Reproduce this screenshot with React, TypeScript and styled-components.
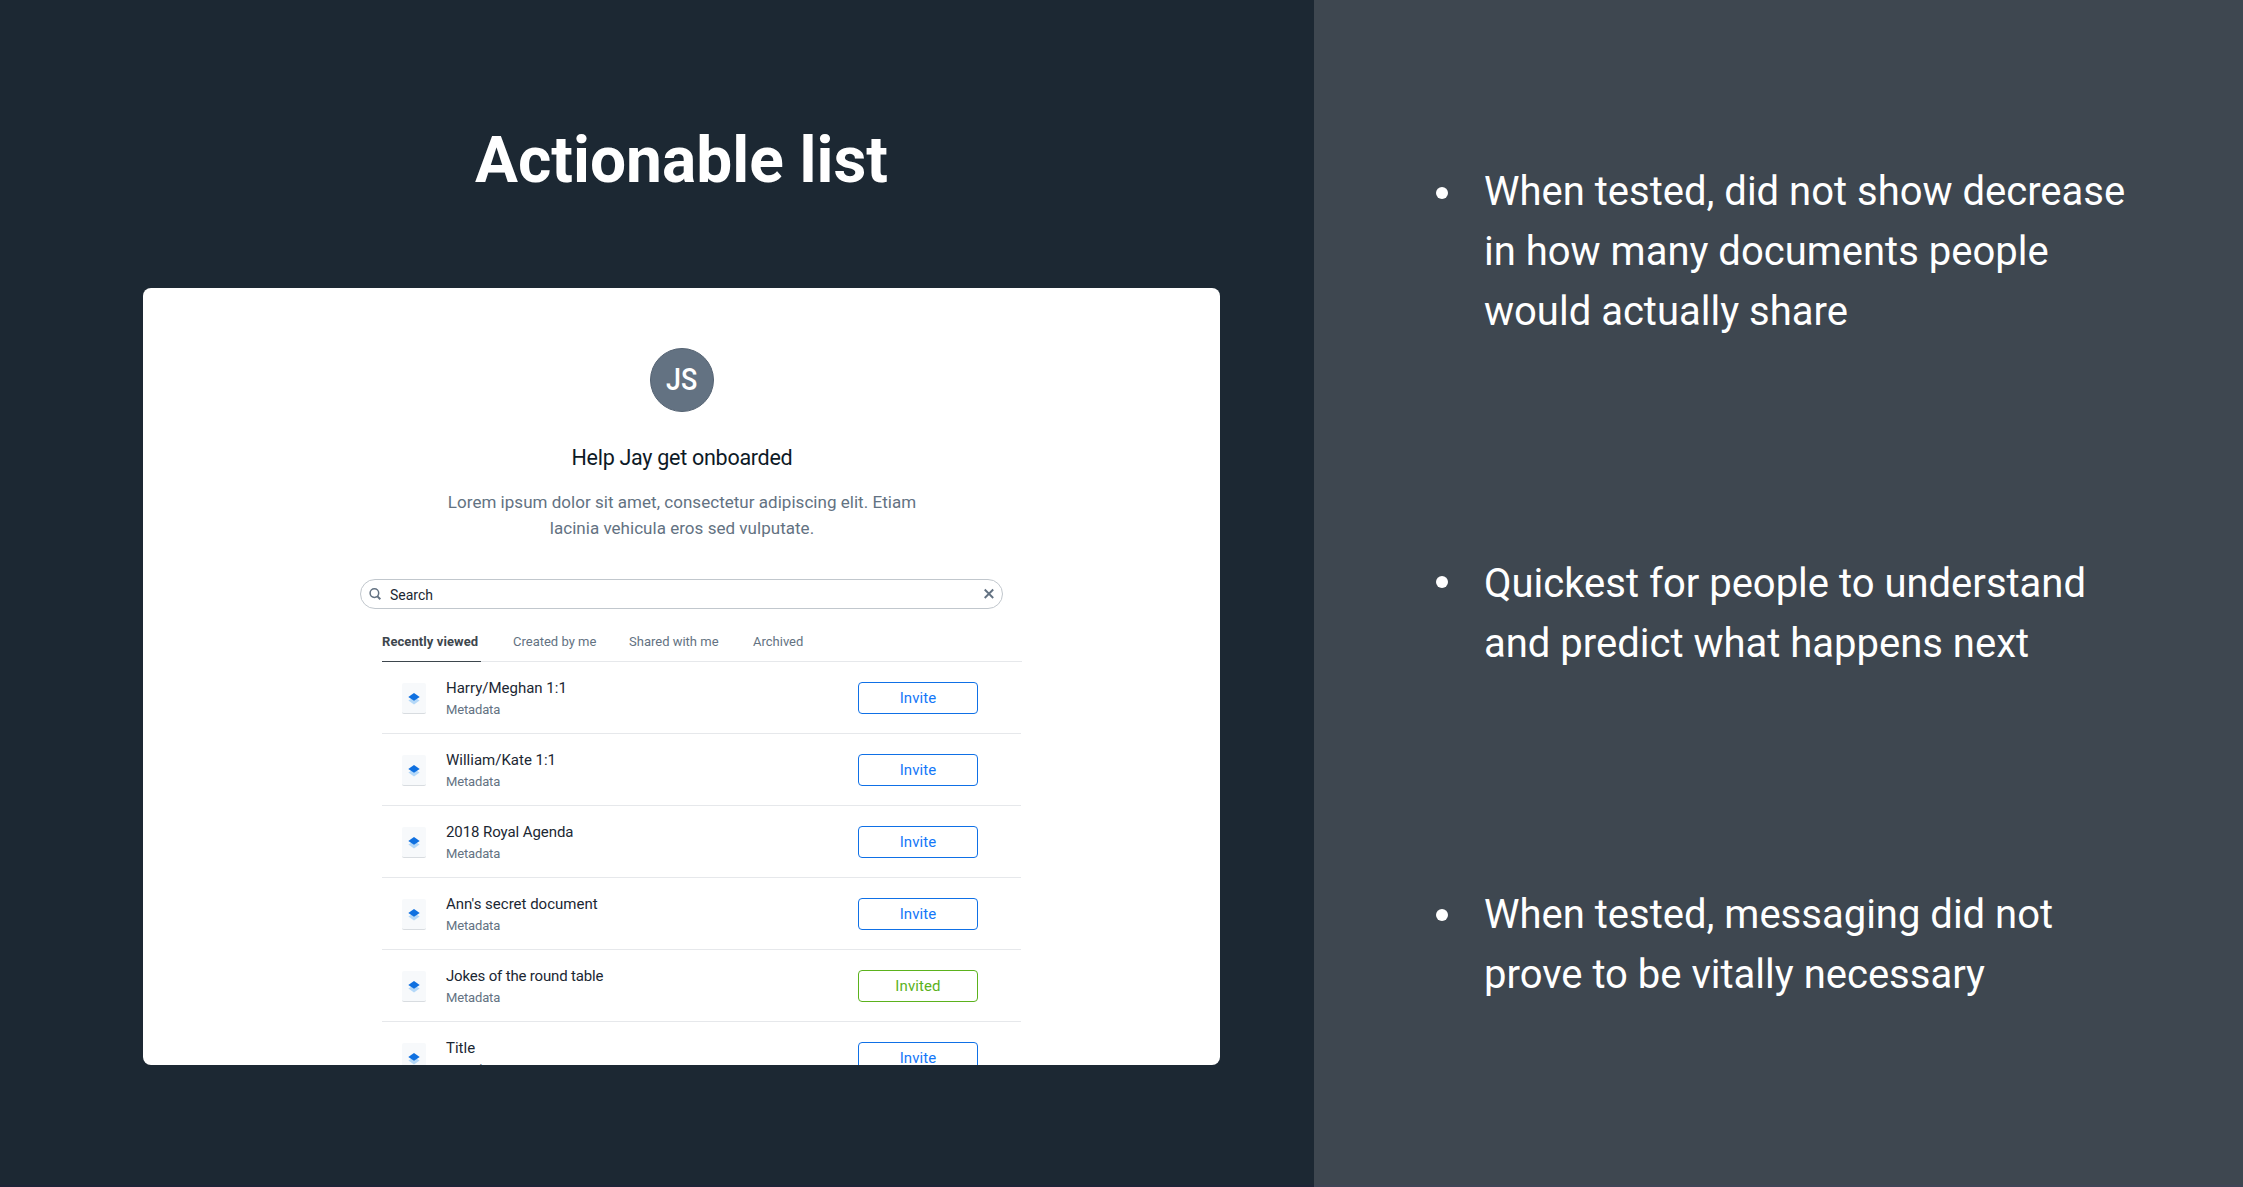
import React from "react";
import styled, { createGlobalStyle } from "styled-components";

const GlobalStyle = createGlobalStyle`
  *, *::before, *::after { box-sizing: border-box; }
  html, body { margin: 0; padding: 0; }
  body { font-family: Roboto, "Liberation Sans", sans-serif; overflow: hidden; }
`;

const Slide = styled.main`
  display: flex;
  width: 2243px;
  height: 1187px;
  overflow: hidden;
`;

const Stage = styled.section`
  display: flex;
  flex-direction: column;
  align-items: center;
  width: 1314px;
  padding: 123px 94px 0 143px;
  background: #1c2833;
  border-bottom: 2px solid #1d2437;
`;

const SlideTitle = styled.h1`
  margin: 0 0 89px;
  font-size: 64px;
  font-weight: 700;
  line-height: 76px;
  color: #fff;
  white-space: nowrap;
`;

const Card = styled.div`
  display: flex;
  flex-direction: column;
  align-items: center;
  width: 1077px;
  height: 777px;
  padding-top: 60px;
  background: #fff;
  border-radius: 8px;
  overflow: hidden;
`;

const Avatar = styled.div`
  display: flex;
  flex: none;
  align-items: center;
  justify-content: center;
  width: 64px;
  height: 64px;
  padding-bottom: 2px;
  border: 1px solid #556373;
  border-radius: 50%;
  background: #637282;
`;

const Initials = styled.span`
  color: #fff;
  font-size: 32px;
  font-weight: 500;
  line-height: 32px;
  transform: scaleX(0.84);
`;

const Heading = styled.h2`
  margin: 31px 0 0 1px;
  font-size: 21.5px;
  font-weight: 400;
  line-height: 30px;
  letter-spacing: -0.28px;
  color: #0d1a26;
  white-space: nowrap;
`;

const Blurb = styled.p`
  margin: 16px 0 0 1px;
  font-size: 17px;
  line-height: 26px;
  letter-spacing: 0.03px;
  color: #637282;
  text-align: center;
  white-space: pre-line;
`;

const SearchField = styled.div`
  display: flex;
  flex: none;
  align-items: center;
  width: 643px;
  height: 30px;
  margin-top: 38px;
  padding: 0 7px 0 8px;
  border: 1px solid #c1c7cd;
  border-radius: 15px;
`;

const SearchText = styled.span`
  flex: 1;
  margin-left: 8px;
  padding-top: 2px;
  font-size: 14px;
  line-height: 20px;
  color: #1b2733;
`;

const Browser = styled.div`
  flex: none;
  width: 640px;
  margin-left: 41px;
`;

const Tabs = styled.nav`
  display: flex;
  height: 53px;
  padding-top: 20px;
  border-bottom: 1px solid #e6e8eb;
`;

const Tab = styled.span<{ $active?: boolean; $width: number }>`
  flex: none;
  width: ${(p) => p.$width}px;
  height: 33px;
  margin-right: 32px;
  padding-top: 3px;
  font-size: 13px;
  font-weight: ${(p) => (p.$active ? 700 : 400)};
  line-height: 20px;
  letter-spacing: ${(p) => (p.$active ? "0.08px" : "0")};
  color: ${(p) => (p.$active ? "#3d464d" : "#637282")};
  border-bottom: ${(p) => (p.$active ? "1px solid #3d464d" : "0")};
  white-space: nowrap;
`;

const Row = styled.div`
  display: flex;
  align-items: flex-start;
  width: 639px;
  height: 72px;
  padding: 20px 43px 0 20px;
  border-bottom: 1px solid #e6e8eb;
`;

const Thumb = styled.div`
  display: flex;
  justify-content: center;
  width: 24px;
  height: 31px;
  margin-top: 1px;
  padding-top: 10px;
  background: #f7f9fb;
  border-bottom: 1px solid #d8dce0;
  border-radius: 2px;
`;

const Labels = styled.div`
  display: flex;
  flex: 1;
  flex-direction: column;
  margin-left: 20px;
  margin-top: -5px;
`;

const Name = styled.span<{ $tracking?: number }>`
  font-size: 15px;
  line-height: 22px;
  letter-spacing: ${(p) => p.$tracking ?? 0}px;
  color: #1b2733;
`;

const Meta = styled.span`
  margin-top: 1px;
  font-size: 13px;
  line-height: 20px;
  letter-spacing: -0.15px;
  color: #637282;
`;

const InviteButton = styled.button<{ $sent?: boolean }>`
  width: 120px;
  height: 32px;
  padding: 0;
  border: 1px solid ${(p) => (p.$sent ? "#5bb21d" : "#0f70e6")};
  border-radius: 4px;
  background: #fff;
  color: ${(p) => (p.$sent ? "#5bb21d" : "#1477f8")};
  font-family: inherit;
  font-size: 15px;
  line-height: 30px;
  letter-spacing: 0.1px;
`;

const Notes = styled.ul`
  flex: 1;
  display: flex;
  flex-direction: column;
  margin: 0;
  padding: 162px 0 0 122px;
  background: #3e4750;
  border-bottom: 2px solid #3f4556;
  list-style: none;
`;

const Note = styled.li<{ $gap: number }>`
  display: flex;
  gap: 36px;
  margin-bottom: ${(p) => p.$gap}px;
  font-size: 40px;
  line-height: 60px;
  color: #fff;
  white-space: pre-line;
`;

const Dot = styled.span<{ $drop: number }>`
  flex: none;
  width: 12px;
  height: 12px;
  margin-top: ${(p) => p.$drop}px;
  border-radius: 50%;
  background: #fff;
`;

const SearchIcon = () => (
  <svg width="13" height="13" viewBox="0 0 13 13" fill="none" stroke="#637282">
    <circle cx="5.4" cy="5.1" r="4.3" strokeWidth="1.5" />
    <path d="M8.2 8.1L11.3 11.3" strokeWidth="2" />
  </svg>
);

const ClearIcon = () => (
  <svg width="12" height="12" viewBox="0 0 12 12" stroke="#637282" strokeWidth="1.9">
    <path d="M1.7 1.5L10.2 10M10.2 1.5L1.7 10" />
  </svg>
);

const StackIcon = () => (
  <svg width="12" height="12" viewBox="0 0 12 12">
    <path d="M6 4L11.6 7.6L6 11.5L0.4 7.6Z" fill="#b4d8f8" />
    <path d="M6 0.1L11.7 3.9L6 7.8L0.3 3.9Z" fill="#0f70e0" />
  </svg>
);

const documents = [
  { name: "Harry/Meghan 1:1" },
  { name: "William/Kate 1:1" },
  { name: "2018 Royal Agenda", tracking: -0.08 },
  { name: "Ann's secret document" },
  { name: "Jokes of the round table", tracking: -0.17, sent: true },
  { name: "Title" },
];

const tabs = [
  { label: "Recently viewed", width: 99, active: true },
  { label: "Created by me", width: 84 },
  { label: "Shared with me", width: 92 },
  { label: "Archived", width: 52 },
];

const notes = [
  { text: "When tested, did not show decrease\nin how many documents people\nwould actually share", drop: 25, gap: 212 },
  { text: "Quickest for people to understand\nand predict what happens next", drop: 22, gap: 211 },
  { text: "When tested, messaging did not\nprove to be vitally necessary", drop: 24, gap: 0 },
];

export default function App() {
  return (
    <>
      <GlobalStyle />
      <Slide>
        <Stage>
          <SlideTitle>Actionable list</SlideTitle>
          <Card>
            <Avatar>
              <Initials>JS</Initials>
            </Avatar>
            <Heading>Help Jay get onboarded</Heading>
            <Blurb>
              {"Lorem ipsum dolor sit amet, consectetur adipiscing elit. Etiam\nlacinia vehicula eros sed vulputate."}
            </Blurb>
            <SearchField>
              <SearchIcon />
              <SearchText>Search</SearchText>
              <ClearIcon />
            </SearchField>
            <Browser>
              <Tabs>
                {tabs.map((t) => (
                  <Tab key={t.label} $active={t.active} $width={t.width}>
                    {t.label}
                  </Tab>
                ))}
              </Tabs>
              {documents.map((d) => (
                <Row key={d.name}>
                  <Thumb>
                    <StackIcon />
                  </Thumb>
                  <Labels>
                    <Name $tracking={d.tracking}>{d.name}</Name>
                    <Meta>Metadata</Meta>
                  </Labels>
                  <InviteButton $sent={d.sent}>{d.sent ? "Invited" : "Invite"}</InviteButton>
                </Row>
              ))}
            </Browser>
          </Card>
        </Stage>
        <Notes>
          {notes.map((n) => (
            <Note key={n.text} $gap={n.gap}>
              <Dot $drop={n.drop} />
              <span>{n.text}</span>
            </Note>
          ))}
        </Notes>
      </Slide>
    </>
  );
}
